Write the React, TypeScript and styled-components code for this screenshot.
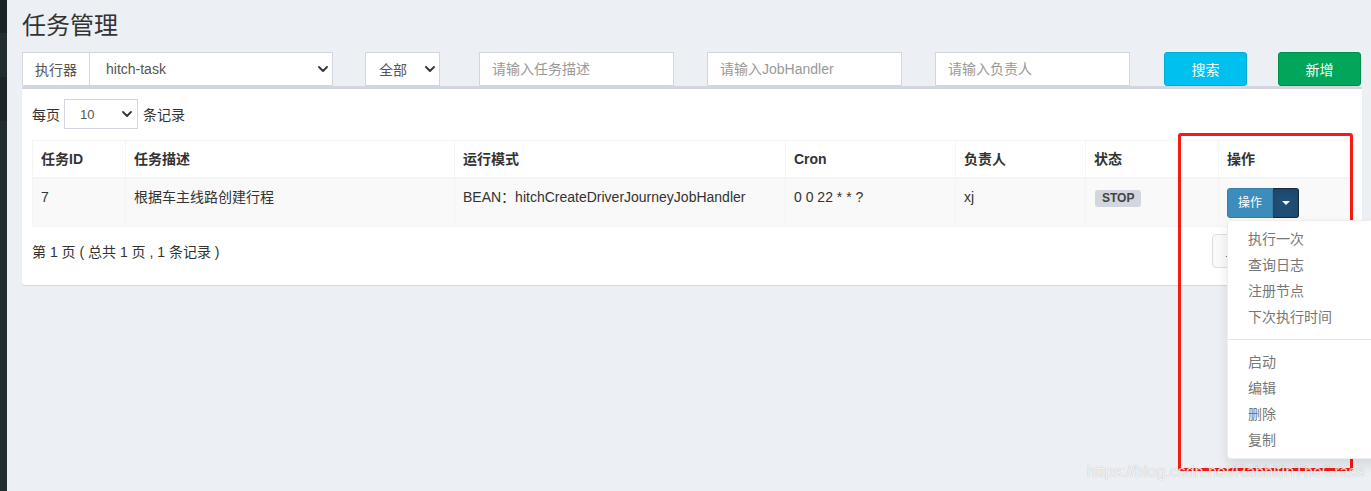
import React from 'react';
import styled, { createGlobalStyle } from 'styled-components';

const GlobalStyle = createGlobalStyle`
  html, body {
    margin: 0;
    padding: 0;
    overflow: hidden;
    background: #ecf0f5;
    font-family: "Liberation Sans", "Noto Sans CJK SC", sans-serif;
    color: #333;
    font-size: 14px;
  }
  * {
    box-sizing: border-box;
  }
`;

const columns = [
  { title: '任务ID', width: 93 },
  { title: '任务描述', width: 329 },
  { title: '运行模式', width: 331 },
  { title: 'Cron', width: 170 },
  { title: '负责人', width: 130 },
  { title: '状态', width: 133 },
  { title: '操作', width: 133 },
];

const menuGroups = [
  ['执行一次', '查询日志', '注册节点', '下次执行时间'],
  ['启动', '编辑', '删除', '复制'],
];

const Chevron: React.FC<{ size?: number }> = ({ size = 10 }) => (
  <svg width={size} height={size * 0.6} viewBox="0 0 10 6" fill="none">
    <path d="M1 1l4 4 4-4" stroke="#333" strokeWidth="1.8" strokeLinecap="round" strokeLinejoin="round" />
  </svg>
);

export default function App() {
  return (
    <Page>
      <GlobalStyle />
      <Sidebar>
        <SidebarBlock tone="#1a2226" height={33} />
        <SidebarBlock tone="#222d32" height={44} />
        <SidebarBlock tone="#1c2529" height={44} />
        <SidebarBlock tone="#222d32" />
      </Sidebar>
      <Main>
        <Title>任务管理</Title>
        <FilterRow>
          <FilterCell width={311}>
            <InputGroup>
              <Addon>执行器</Addon>
              <SelectBox grow>
                <span>hitch-task</span>
                <Chevron />
              </SelectBox>
            </InputGroup>
          </FilterCell>
          <FilterCell width={75} offset={32}>
            <SelectBox>
              <span>全部</span>
              <Chevron />
            </SelectBox>
          </FilterCell>
          <FilterCell width={195} offset={39}>
            <TextInput placeholder="请输入任务描述" />
          </FilterCell>
          <FilterCell width={195} offset={33}>
            <TextInput placeholder="请输入JobHandler" />
          </FilterCell>
          <FilterCell width={195} offset={33}>
            <TextInput placeholder="请输入负责人" />
          </FilterCell>
          <FilterCell width={83} offset={34}>
            <Button variant="info">搜索</Button>
          </FilterCell>
          <FilterCell width={83} offset={31}>
            <Button variant="success">新增</Button>
          </FilterCell>
        </FilterRow>

        <Box>
          <LengthRow>
            每页
            <SmallSelect>
              <span>10</span>
              <Chevron />
            </SmallSelect>
            条记录
          </LengthRow>

          <Table>
            <colgroup>
              {columns.map((c) => (
                <col key={c.title} style={{ width: c.width }} />
              ))}
            </colgroup>
            <thead>
              <tr>
                {columns.map((c) => (
                  <Th key={c.title}>{c.title}</Th>
                ))}
              </tr>
            </thead>
            <tbody>
              <StripedRow>
                <Td>7</Td>
                <Td>根据车主线路创建行程</Td>
                <Td>BEAN：hitchCreateDriverJourneyJobHandler</Td>
                <Td>0 0 22 * * ?</Td>
                <Td>xj</Td>
                <Td>
                  <Label>STOP</Label>
                </Td>
                <Td>
                  <BtnGroup>
                    <SmallButton>操作</SmallButton>
                    <ToggleButton>
                      <Caret />
                    </ToggleButton>
                    <DropdownMenu>
                      {menuGroups.map((group, i) => (
                        <React.Fragment key={i}>
                          {i > 0 && <Divider />}
                          {group.map((item) => (
                            <MenuItem key={item}>{item}</MenuItem>
                          ))}
                        </React.Fragment>
                      ))}
                    </DropdownMenu>
                  </BtnGroup>
                </Td>
              </StripedRow>
            </tbody>
          </Table>

          <TableFooter>
            <Info>第 1 页 ( 总共 1 页 , 1 条记录 )</Info>
            <Pagination>
              <PageLink first>上页</PageLink>
              <PageLink active>1</PageLink>
              <PageLink last>下页</PageLink>
            </Pagination>
          </TableFooter>
        </Box>
      </Main>

      <Annotation />
      <Watermark>https://blog.csdn.net/RabbitInTheGrass</Watermark>
    </Page>
  );
}

const Page = styled.div`
  position: relative;
  display: flex;
  width: 1371px;
  height: 491px;
  overflow: hidden;
`;

const Sidebar = styled.div`
  display: flex;
  flex-direction: column;
  width: 7px;
  flex-shrink: 0;
`;

const SidebarBlock = styled.div<{ tone: string; height?: number }>`
  background: ${({ tone }) => tone};
  height: ${({ height }) => (height ? `${height}px` : 'auto')};
  flex: ${({ height }) => (height ? 'none' : '1')};
`;

const Main = styled.div`
  flex: 1;
  padding: 13px 10px 0 15px;
`;

const Title = styled.h1`
  margin: 0 0 13px;
  font-size: 24px;
  line-height: 26px;
  font-weight: normal;
  color: #333;
`;

const FilterRow = styled.div`
  display: flex;
  height: 34px;
`;

const FilterCell = styled.div<{ width: number; offset?: number }>`
  display: flex;
  width: ${({ width }) => width}px;
  margin-left: ${({ offset = 0 }) => offset}px;
  flex-shrink: 0;
`;

const InputGroup = styled.div`
  display: flex;
  width: 100%;
  height: 34px;
`;

const Addon = styled.div`
  width: 67px;
  flex-shrink: 0;
  display: flex;
  align-items: center;
  justify-content: center;
  background: #fff;
  border: 1px solid #d2d6de;
  border-right: none;
  color: #555;
`;

const SelectBox = styled.div<{ grow?: boolean }>`
  display: flex;
  align-items: center;
  justify-content: space-between;
  flex: 1;
  height: 34px;
  padding: ${({ grow }) => (grow ? '0 4px 0 16px' : '0 4px 0 13px')};
  background: #fff;
  border: 1px solid #d2d6de;
  color: #555;
`;

const SmallSelect = styled(SelectBox)`
  flex: none;
  width: 74px;
  height: 30px;
  margin: 0 5px 0 4px;
  padding: 0 5px 0 15px;
  font-size: 13px;
`;

const TextInput = styled.input`
  height: 34px;
  width: 100%;
  padding: 0 12px;
  border: 1px solid #d2d6de;
  background: #fff;
  font: inherit;
  color: #555;
  outline: none;
  &::placeholder {
    color: #999;
  }
`;

const Button = styled.button<{ variant: 'info' | 'success' }>`
  width: 100%;
  height: 34px;
  border-radius: 3px;
  border: 1px solid ${({ variant }) => (variant === 'info' ? '#00acd6' : '#008d4c')};
  background: ${({ variant }) => (variant === 'info' ? '#00c0ef' : '#00a65a')};
  color: #fff;
  font: inherit;
  cursor: pointer;
`;

const Box = styled.div`
  background: #fff;
  border-top: 3px solid #d2d6de;
  border-radius: 3px;
  box-shadow: 0 1px 1px rgba(0, 0, 0, 0.1);
  padding: 10px;
`;

const LengthRow = styled.div`
  display: flex;
  align-items: center;
  height: 30px;
  margin-bottom: 11px;
`;

const Table = styled.table`
  width: 100%;
  border-collapse: collapse;
  table-layout: fixed;
  border: 1px solid #f4f4f4;
`;

const Th = styled.th`
  text-align: left;
  padding: 8px;
  line-height: 20px;
  font-weight: bold;
  border: 1px solid #f4f4f4;
  border-bottom-width: 2px;
  vertical-align: bottom;
  color: #333;
`;

const StripedRow = styled.tr`
  background: #f9f9f9;
`;

const Td = styled.td`
  padding: 8px;
  line-height: 20px;
  border: 1px solid #f4f4f4;
  vertical-align: top;
  height: 47px;
  color: #333;
  white-space: nowrap;
`;

const Label = styled.span`
  display: inline-block;
  margin: 1px 0 0 1px;
  padding: 2px 7px 2px;
  font-size: 12px;
  line-height: 13px;
  font-weight: bold;
  color: #444;
  background: #d2d6de;
  border-radius: 3px;
`;

const BtnGroup = styled.div`
  position: relative;
  display: inline-flex;
  margin-top: 1px;
`;

const SmallButton = styled.button`
  height: 30px;
  padding: 0 10px;
  font: inherit;
  font-size: 12px;
  color: #fff;
  background: #3c8dbc;
  border: 1px solid #367fa9;
  border-radius: 3px 0 0 3px;
`;

const ToggleButton = styled.button`
  width: 26px;
  height: 30px;
  display: flex;
  align-items: center;
  justify-content: center;
  background: #204d74;
  border: 1px solid #122b40;
  border-left: none;
  border-radius: 0 3px 3px 0;
  box-shadow: inset 0 3px 5px rgba(0, 0, 0, 0.125);
`;

const Caret = styled.span`
  width: 0;
  height: 0;
  border-top: 4px solid #fff;
  border-left: 4px solid transparent;
  border-right: 4px solid transparent;
`;

const DropdownMenu = styled.ul`
  position: absolute;
  top: calc(100% + 2px);
  left: 0;
  z-index: 10;
  min-width: 160px;
  margin: 0;
  padding: 5px 0;
  list-style: none;
  background: #fff;
  border: 1px solid #eee;
  border-radius: 4px;
  box-shadow: 0 6px 12px rgba(0, 0, 0, 0.1);
`;

const MenuItem = styled.li`
  padding: 3px 20px;
  line-height: 20px;
  color: #777;
  font-size: 14px;
  white-space: nowrap;
`;

const Divider = styled.li`
  height: 1px;
  margin: 9px 0;
  background: #e5e5e5;
`;

const TableFooter = styled.div`
  display: flex;
  align-items: center;
  justify-content: space-between;
  margin: 7px 0 7px;
`;

const Info = styled.div`
  color: #333;
`;

const Pagination = styled.div`
  display: flex;
`;

const PageLink = styled.span<{ active?: boolean; first?: boolean; last?: boolean }>`
  padding: 6px 12px;
  line-height: 20px;
  border: 1px solid #ddd;
  margin-left: -1px;
  color: ${({ active }) => (active ? '#fff' : '#777')};
  background: ${({ active }) => (active ? '#3c8dbc' : '#fafafa')};
  border-radius: ${({ first, last }) => (first ? '4px 0 0 4px' : last ? '0 4px 4px 0' : '0')};
`;

const Annotation = styled.div`
  position: absolute;
  left: 1178px;
  top: 133px;
  width: 175px;
  height: 338px;
  border: 3px solid #f51a12;
  border-radius: 3px;
  pointer-events: none;
`;

const Watermark = styled.div`
  position: absolute;
  left: 1087px;
  top: 461px;
  font-size: 16px;
  line-height: 22px;
  color: rgba(255, 255, 255, 0.85);
  text-shadow: 0 0 1px rgba(0, 0, 0, 0.3);
  white-space: nowrap;
`;
